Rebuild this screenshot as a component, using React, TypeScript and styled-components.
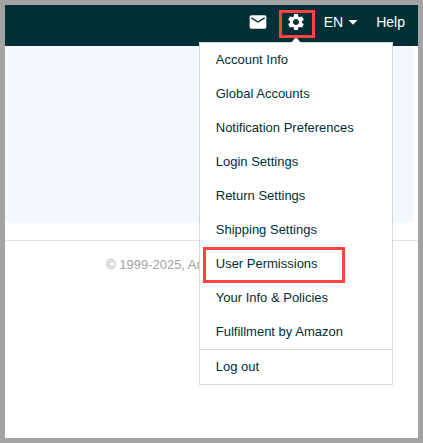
import React from "react";
import styled, { createGlobalStyle } from "styled-components";
import { MdMail, MdSettings } from "react-icons/md";

const GlobalStyle = createGlobalStyle`
  * { box-sizing: border-box; }
  body {
    margin: 0;
    background: #fff;
    font-family: "Liberation Sans", Arial, sans-serif;
  }
`;

const Frame = styled.div`
  display: flex;
  flex-direction: column;
  height: 443px;
  border: 5px solid #a3a3a3;
  background: #fff;
  overflow: hidden;
`;

const Header = styled.header`
  display: flex;
  align-items: center;
  justify-content: flex-end;
  height: 41px;
  flex: none;
  padding: 0 13px 7px 0;
  background: #002f36;
  color: #fff;
  font-size: 14px;
  line-height: 16px;
`;

const IconLink = styled.span`
  display: flex;
  margin-right: 11px;
`;

const Settings = styled.div`
  position: relative;
  display: flex;
  align-items: center;
  justify-content: center;
  width: 36px;
  height: 28px;
  margin-top: 4px;
  padding: 0 2px 4px 0;
  border: 3px solid #fe4141;
`;

const Language = styled.span`
  display: flex;
  align-items: center;
  gap: 5px;
  margin: 0 18px 0 9px;
`;

const Menu = styled.nav`
  position: absolute;
  z-index: 2;
  top: 29px;
  left: -83px;
  width: 194px;
  height: 343px;
  background: #fff;
  border: 1px solid #d5d9d9;
  color: #002f36;
  font-size: 13px;
`;

const Pointer = styled.svg`
  position: absolute;
  top: -6px;
  left: 90px;
`;

const MenuItem = styled.a<{ $last?: boolean }>`
  display: flex;
  align-items: center;
  height: 34px;
  padding-left: 16px;
  ${(p) => p.$last && "height: 35px; border-top: 1px solid #d5d9d9;"}
`;

const Highlight = styled.span`
  position: absolute;
  left: 3px;
  top: 204px;
  width: 142px;
  height: 36px;
  border: 3px solid #fe4141;
`;

const Content = styled.main`
  height: 176px;
  flex: none;
  margin-right: 5px;
  background: #f4f8fa;
`;

const Footer = styled.footer`
  margin-top: 18px;
  padding: 16px 0 0 101px;
  border-top: 1px solid #e4e5e6;
  color: #a3a3a3;
  font-size: 13px;
  line-height: 16px;
`;

const Copyright = styled.div`
  width: 94px;
  overflow: hidden;
  white-space: nowrap;
`;

const items = [
  "Account Info",
  "Global Accounts",
  "Notification Preferences",
  "Login Settings",
  "Return Settings",
  "Shipping Settings",
  "User Permissions",
  "Your Info & Policies",
  "Fulfillment by Amazon",
];

export default function App() {
  return (
    <>
      <GlobalStyle />
      <Frame>
        <Header>
          <IconLink>
            <MdMail size={20} />
          </IconLink>
          <Settings>
            <MdSettings size={20} />
            <Menu>
              <Pointer width="12" height="7" viewBox="0 0 12 7">
                <path d="M0 7 L4.5 1.7 Q6 .5 7.5 1.7 L12 7Z" fill="#fff" />
              </Pointer>
              {items.map((label) => (
                <MenuItem key={label}>{label}</MenuItem>
              ))}
              <MenuItem $last>Log out</MenuItem>
              <Highlight />
            </Menu>
          </Settings>
          <Language>
            EN
            <svg width="10" height="5" viewBox="0 0 10 5">
              <path d="M.5 0h9L5 4.7Z" fill="#fff" />
            </svg>
          </Language>
          <span>Help</span>
        </Header>
        <Content />
        <Footer>
          <Copyright>© 1999-2025, Am</Copyright>
        </Footer>
      </Frame>
    </>
  );
}
